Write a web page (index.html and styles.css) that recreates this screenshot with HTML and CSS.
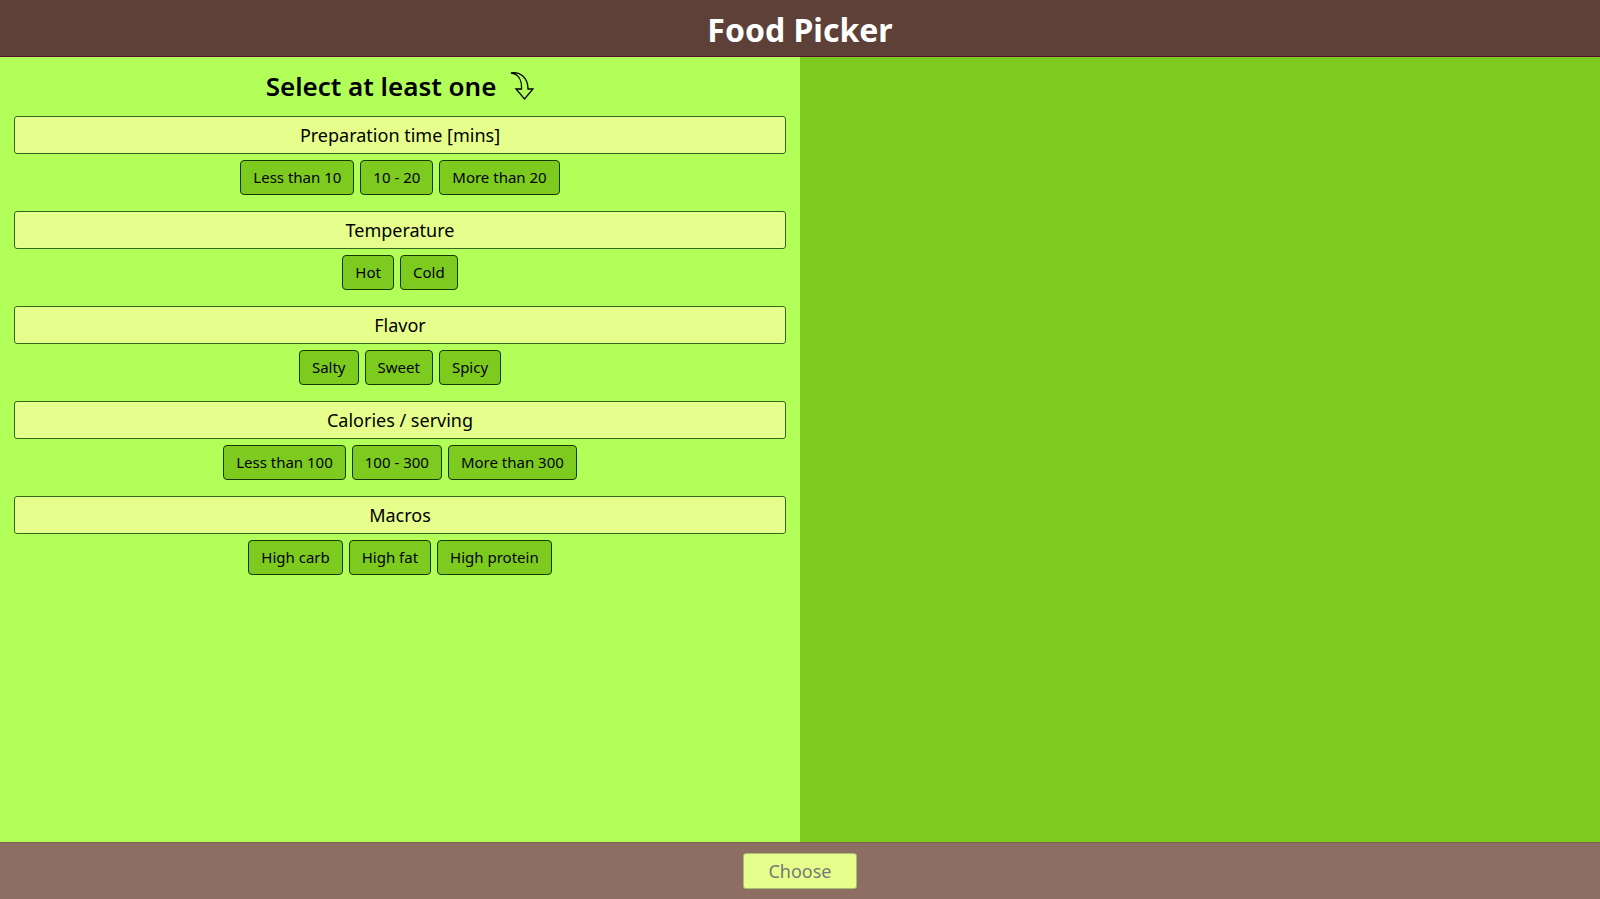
FILE: index.html
```html
<!DOCTYPE html>
<html lang="en">
<head>
<meta charset="utf-8">
<meta name="viewport" content="width=device-width, initial-scale=1">
<title>Food Picker</title>
<link rel="stylesheet" href="styles.css">
</head>
<body>
<header class="header"><h1 class="title">Food Picker</h1></header>
<main class="main">
  <section class="options">
    <h2 class="prompt">
      <span>Select at least one</span>
      <svg class="arrow" viewBox="0 0 24 30" aria-hidden="true"><path d="M1 2C9 0 18 6 18 18H23L14.500 28L6 18H11.500C12 10 9 3 1 2Z"/></svg>
    </h2>
    <section class="group">
      <h3 class="label">Preparation time [mins]</h3>
      <div class="choices"><button class="choice" type="button">Less than 10</button><button class="choice" type="button">10 - 20</button><button class="choice" type="button">More than 20</button></div>
    </section>
    <section class="group">
      <h3 class="label">Temperature</h3>
      <div class="choices"><button class="choice" type="button">Hot</button><button class="choice" type="button">Cold</button></div>
    </section>
    <section class="group">
      <h3 class="label">Flavor</h3>
      <div class="choices"><button class="choice" type="button">Salty</button><button class="choice" type="button">Sweet</button><button class="choice" type="button">Spicy</button></div>
    </section>
    <section class="group">
      <h3 class="label">Calories / serving</h3>
      <div class="choices"><button class="choice" type="button">Less than 100</button><button class="choice" type="button">100 - 300</button><button class="choice" type="button">More than 300</button></div>
    </section>
    <section class="group">
      <h3 class="label">Macros</h3>
      <div class="choices"><button class="choice" type="button">High carb</button><button class="choice" type="button">High fat</button><button class="choice" type="button">High protein</button></div>
    </section>
  </section>
  <section class="results" aria-label="Results"></section>
</main>
<footer class="footer"><button class="choose" type="button" disabled>Choose</button></footer>
</body>
</html>
```
FILE: styles.css
```css
* { box-sizing: border-box; }
body {
  margin: 0;
  min-height: 100vh;
  display: flex;
  flex-direction: column;
  font-family: "Comic Sans MS", "Noto Sans", sans-serif;
  color: #000;
}
button { font-family: inherit; }
.header {
  padding: 10px 16px 6px;
  background: #5d4037;
  border-bottom: 1px solid #50102c;
  text-align: center;
}
.title { margin: 0; font-size: 32px; line-height: 40px; color: #fff; }
.main { flex: 1; display: grid; grid-template-columns: 1fr 1fr; }
.options { background: #b2ff59; padding: 11px 14px; }
.results { background: #7ecb20; }
.prompt {
  display: flex;
  justify-content: center;
  align-items: center;
  gap: 14px;
  margin: 0 0 12px;
  font-size: 26px;
  line-height: 36px;
  font-weight: 600;
}
.arrow { width: 24px; height: 30px; fill: none; stroke: #000; stroke-width: 1.3; }
.group { margin-bottom: 17px; }
.label {
  margin: 0 0 6px;
  padding: 4px;
  border: 1px solid #33691e;
  border-radius: 3px;
  background: #e6ff8c;
  font-size: 18px;
  line-height: 28px;
  font-weight: 400;
  text-align: center;
}
.choices { display: flex; flex-wrap: wrap; justify-content: center; gap: 6px; }
.choice {
  padding: 5px 12px;
  border: 1px solid #153800;
  border-radius: 4px;
  background: #7ecb20;
  color: #000;
  font-size: 15px;
  line-height: 23px;
}
.group + .group { margin-top: -1px; }
.footer {
  display: flex;
  justify-content: center;
  padding: 10px;
  border-top: 1px solid #806055;
  background: #8d6e63;
}
.choose {
  padding: 4px 24px;
  border: 1px solid #a8bc75;
  border-radius: 3px;
  background: #e6ff8c;
  color: #777;
  font-size: 18px;
  line-height: 26px;
}
```
